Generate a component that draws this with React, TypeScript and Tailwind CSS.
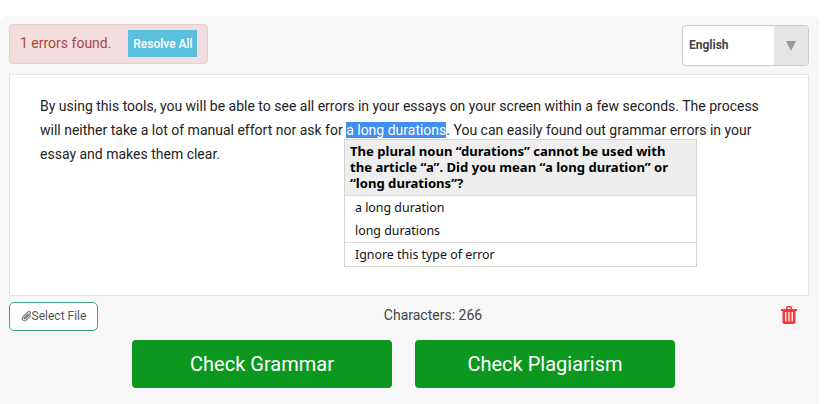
const ErrorPopup = () => (
  <div className="absolute left-[334px] top-[64px] w-[353px] border border-[#d4d4c8] bg-white font-['Noto_Sans','DejaVu_Sans',sans-serif] text-[12.4px] text-[#111]">
    <div className="border-b border-[#ddd] bg-[#eeeeee] pt-[3px] pr-[20px] pb-[4px] pl-[5px] text-[13.1px] leading-[16px] font-bold text-black">
      The plural noun “durations” cannot be used with the article “a”. Did you mean “a long duration” or “long durations”?
    </div>
    <div className="px-[10px]">
      <div className="h-[23px] leading-[23px]">a long duration</div>
      <div className="h-[23px] leading-[23px]">long durations</div>
    </div>
    <div className="h-[24px] border-t border-[#ddd] px-[10px] leading-[23px]">Ignore this type of error</div>
  </div>
);

const TrashIcon = () => (
  <svg width="16" height="18" viewBox="0 0 16 18" className="mt-[4px] mr-[12px]">
    <path d="M0 3h16v2H0z M5 3V1.600C5 .7 5.700 0 6.600 0h2.800C10.300 0 11 .7 11 1.600V3H9.500V1.500h-3V3z" fill="#ee3a3a" />
    <path d="M1.500 4.500h13V16c0 1.100-.9 2-2 2h-9c-1.100 0-2-.9-2-2z" fill="#ee3a3a" />
    <path d="M4 6h1.500v9.500H4z M7.250 6h1.500v9.500h-1.500z M10.500 6H12v9.500h-1.500z" fill="#fbe3e3" />
  </svg>
);

const PaperclipIcon = () => (
  <svg width="11" height="11" viewBox="0 0 11 11" fill="none" stroke="#777" strokeWidth="1.100">
    <path d="M9.800 4.600 5.200 9.200a2.200 2.200 0 0 1-3.200-3.200l5-5a1.400 1.400 0 0 1 2 2L4.300 7.700a.6.600 0 0 1-.9-.9l4-4" />
  </svg>
);

const TopBar = () => (
  <div className="flex h-[50px] items-start justify-between">
    <div className="flex h-[40px] w-[199px] items-center rounded-[4px] border border-[#ebccd1] bg-[#f2dede] pl-[10px] text-[#a94442]">
      <span className="mt-[-2px] text-[14px]">1 errors found.</span>
      <button type="button" className="mt-[-1px] ml-[17px] h-[27px] w-[69px] bg-[#5bc0de] text-[12px] font-medium text-white">
        Resolve All
      </button>
    </div>
    <div className="mt-[1px] flex h-[41px] w-[127px] overflow-hidden rounded-[4px] border border-[#ccc] bg-white">
      <div className="flex-1 pl-[6px] text-[12px] leading-[38px] font-bold text-[#444]">English</div>
      <div className="flex w-[34px] items-center justify-center bg-[#e6e6e6]">
        <span className="h-0 w-0 border-x-[5px] border-t-[10px] border-x-transparent border-t-[#999]" />
      </div>
    </div>
  </div>
);

export default function App() {
  return (
    <div className="h-[404px] w-[831px] overflow-hidden bg-white pt-[16px] pr-[12px] font-['Roboto',sans-serif]">
      <div className="h-[388px] rounded-t-[6px] bg-[#f7f7f7] pt-[8px] pr-[10px] pl-[9px]">
        <TopBar />
        <div className="relative h-[222px] border border-[#e3e3e3] bg-white px-[30px] pt-[19px] text-[14px] leading-[24px] text-[#222]">
          <p className="w-[730px]">
            By using this tools, you will be able to see all errors in your essays on your screen within a few seconds. The process will neither take a lot of manual effort nor ask for{" "}
            <span className="bg-[#3f8ef0] text-white">a long durations</span>. You can easily found out grammar errors in your essay and makes them clear.
          </p>
          <ErrorPopup />
        </div>
        <div className="mt-[6px] flex items-start justify-between">
          <button type="button" className="flex h-[29px] w-[89px] items-center justify-center rounded-[5px] border border-[#3fa27a] bg-white pb-[1px] text-[12px] text-[#555]">
            <PaperclipIcon />
            Select File
          </button>
          <div className="mr-[13px] text-[14px] leading-[26px] text-[#444]">Characters: 266</div>
          <TrashIcon />
        </div>
        <div className="mt-[9px] flex justify-center gap-[23px] pr-[11px]">
          <button type="button" className="h-[48px] w-[260px] rounded-[4px] bg-[#0c981f] text-[20px] text-white">Check Grammar</button>
          <button type="button" className="h-[48px] w-[260px] rounded-[4px] bg-[#0c981f] text-[20px] text-white">Check Plagiarism</button>
        </div>
      </div>
    </div>
  );
}
